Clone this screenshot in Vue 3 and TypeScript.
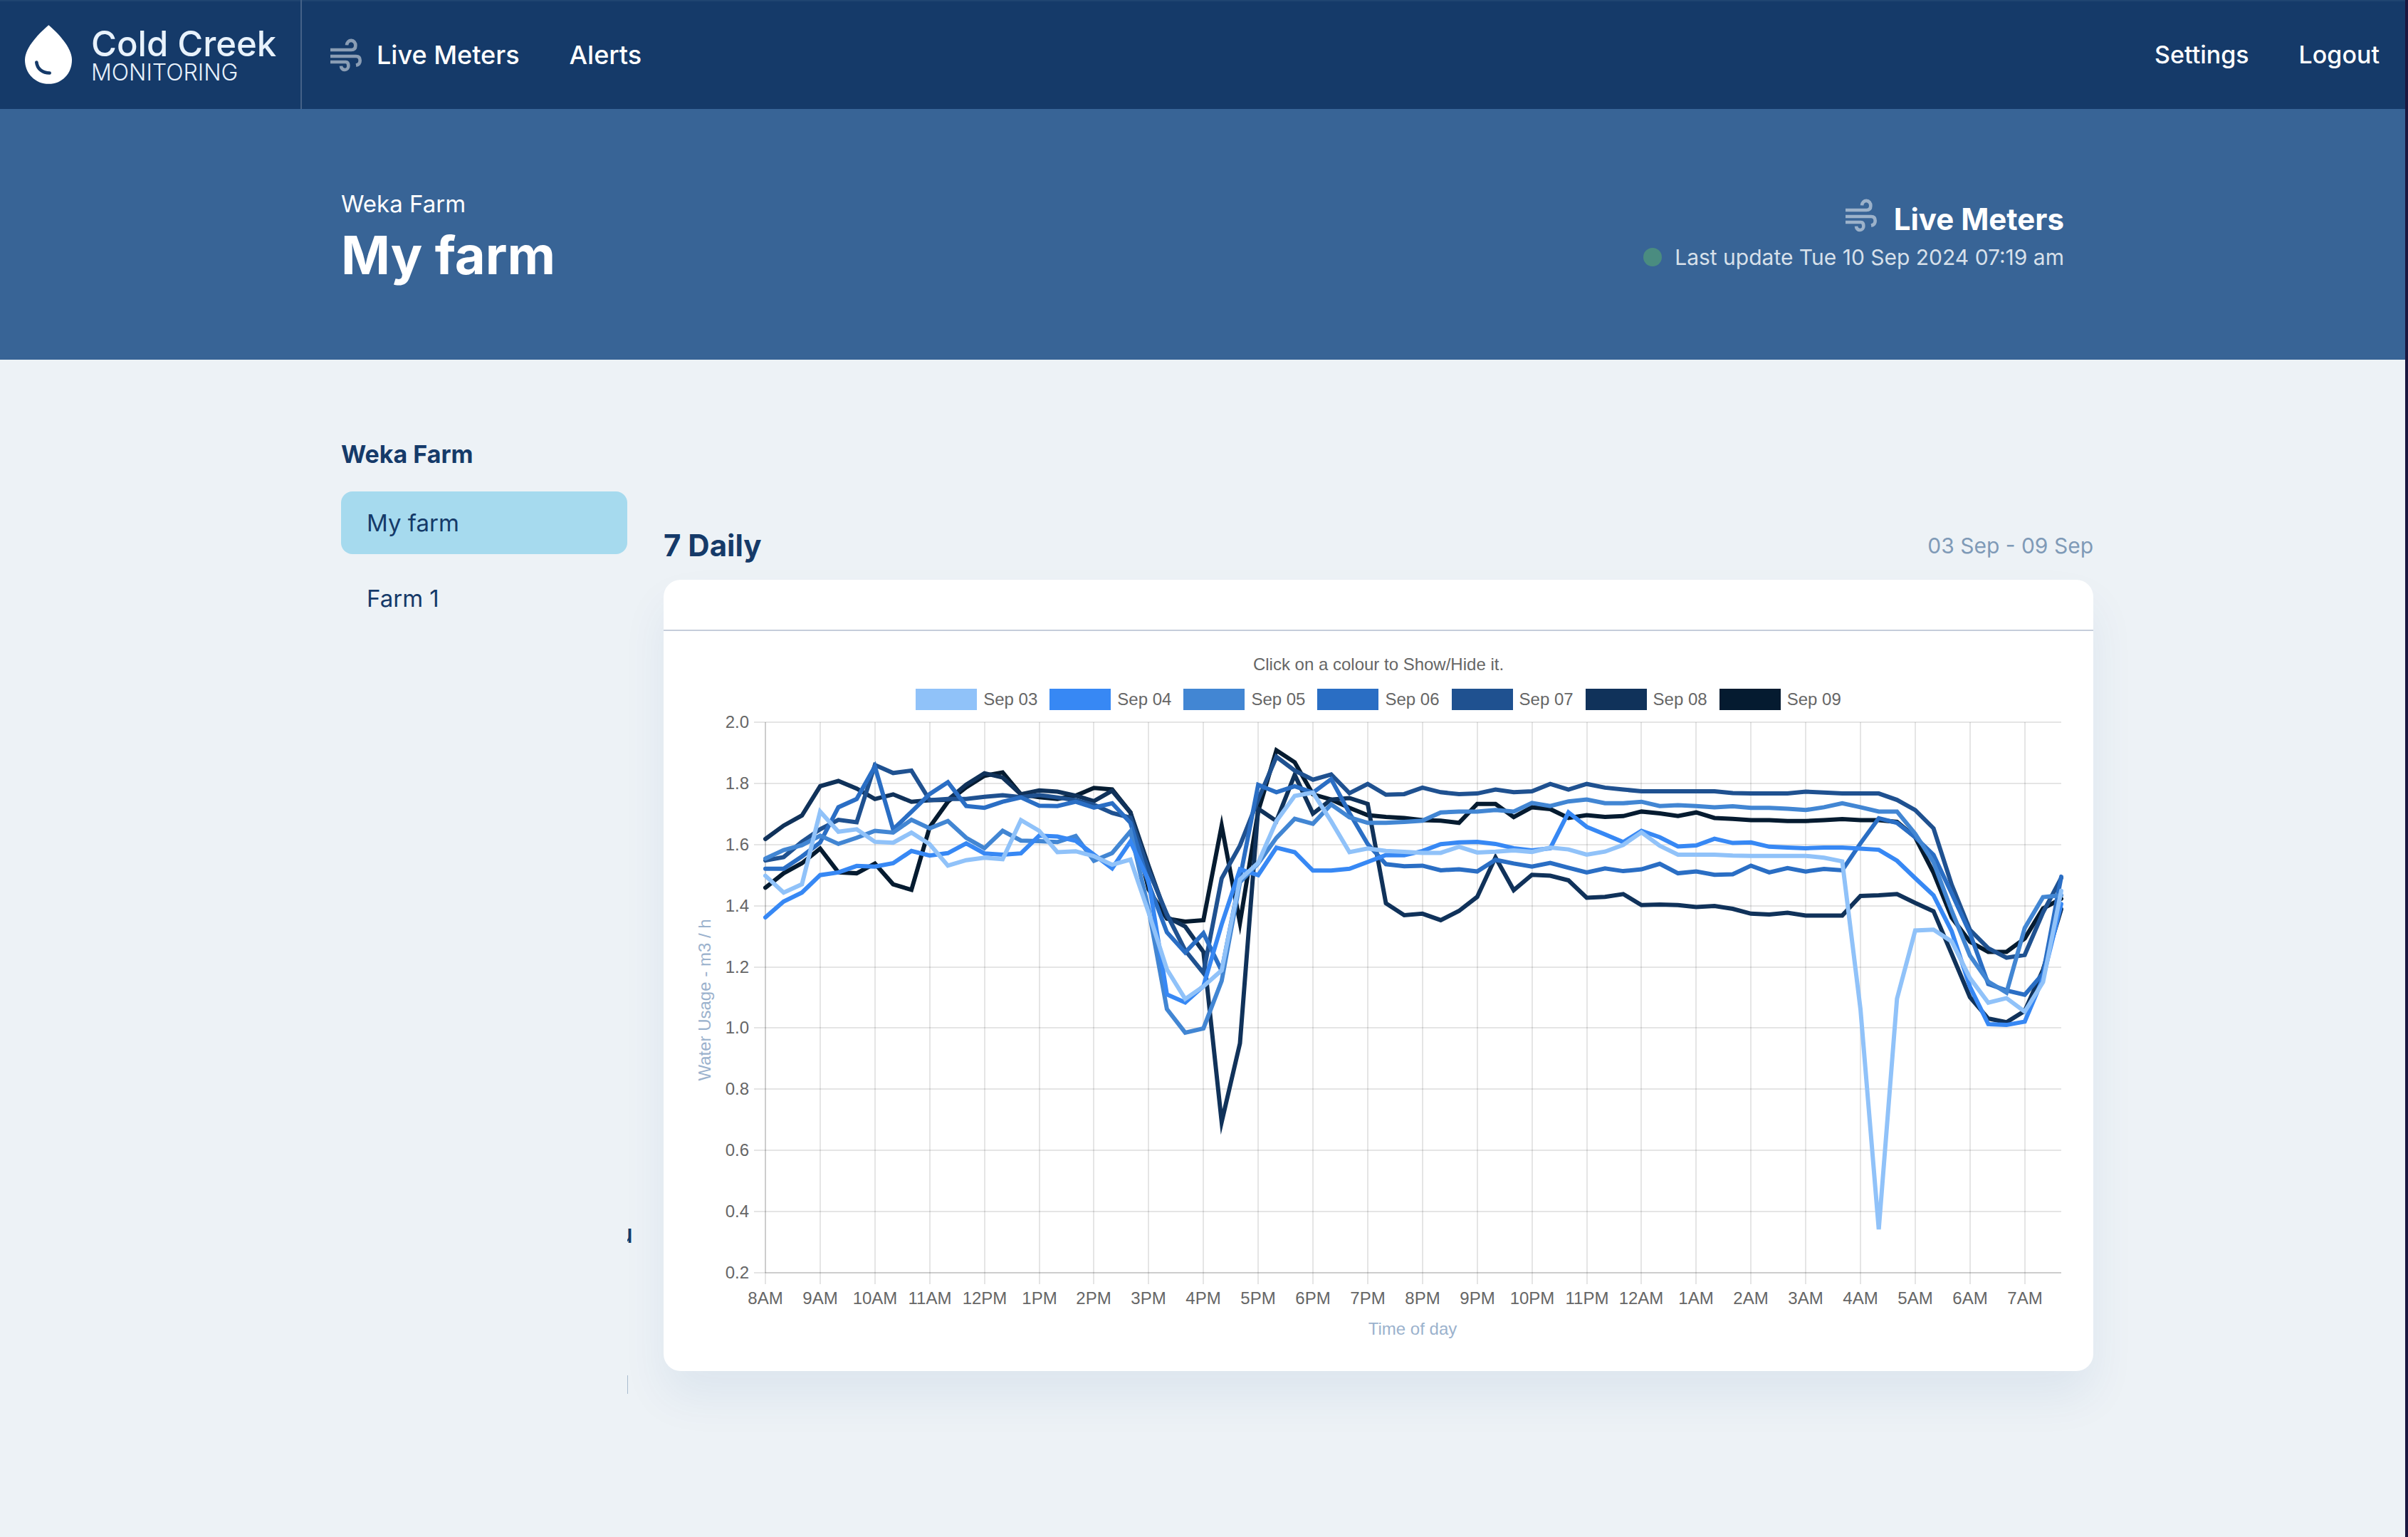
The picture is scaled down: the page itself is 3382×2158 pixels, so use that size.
<script setup lang="ts">
import { reactive } from 'vue'

interface Series {
  label: string
  color: string
  values: number[]
}

// Readings every 20 minutes, starting at 8AM.
const series: Series[] = [
  {
    label: 'Sep 03',
    color: '#90c2f9',
    values: [
      1.498, 1.443, 1.47, 1.708, 1.642, 1.65, 1.609, 1.606, 1.639, 1.601, 1.531, 1.549,
      1.557, 1.552, 1.68, 1.645, 1.575, 1.578, 1.562, 1.534, 1.551, 1.377, 1.192, 1.095,
      1.136, 1.189, 1.486, 1.54, 1.677, 1.759, 1.77, 1.676, 1.575, 1.587, 1.579, 1.576,
      1.573, 1.573, 1.593, 1.574, 1.577, 1.581, 1.576, 1.59, 1.584, 1.567, 1.577, 1.599,
      1.64, 1.596, 1.567, 1.567, 1.567, 1.564, 1.563, 1.563, 1.563, 1.563, 1.557, 1.545,
      1.062, 0.342, 1.096, 1.319, 1.322, 1.283, 1.163, 1.083, 1.098, 1.054, 1.15, 1.449,
    ],
  },
  {
    label: 'Sep 04',
    color: '#3788f4',
    values: [
      1.362, 1.414, 1.443, 1.5, 1.509, 1.53, 1.528, 1.539, 1.579, 1.564, 1.572, 1.604,
      1.571, 1.567, 1.571, 1.629, 1.626, 1.612, 1.567, 1.522, 1.61, 1.481, 1.11, 1.084,
      1.137, 1.339, 1.519, 1.5, 1.59, 1.575, 1.515, 1.515, 1.521, 1.543, 1.566, 1.565,
      1.579, 1.601, 1.607, 1.609, 1.602, 1.588, 1.581, 1.588, 1.705, 1.658, 1.633, 1.608,
      1.645, 1.624, 1.594, 1.597, 1.619, 1.605, 1.607, 1.593, 1.59, 1.588, 1.59, 1.59,
      1.587, 1.583, 1.547, 1.49, 1.434, 1.316, 1.135, 1.013, 1.01, 1.021, 1.163, 1.406,
    ],
  },
  {
    label: 'Sep 05',
    color: '#4286d3',
    values: [
      1.554, 1.582, 1.598, 1.629, 1.602, 1.622, 1.645, 1.639, 1.681, 1.653, 1.677, 1.622,
      1.588, 1.645, 1.613, 1.611, 1.608, 1.628, 1.547, 1.572, 1.643, 1.387, 1.062, 0.985,
      0.999, 1.154, 1.477, 1.538, 1.622, 1.684, 1.668, 1.731, 1.689, 1.671, 1.671, 1.674,
      1.678, 1.705, 1.708, 1.708, 1.713, 1.708, 1.736, 1.726, 1.741, 1.747, 1.735, 1.735,
      1.74, 1.726, 1.729, 1.726, 1.722, 1.725, 1.72, 1.72, 1.717, 1.713, 1.722, 1.735,
      1.722, 1.708, 1.708, 1.635, 1.542, 1.383, 1.237, 1.152, 1.116, 1.327, 1.428, 1.434,
    ],
  },
  {
    label: 'Sep 06',
    color: '#2a6ec4',
    values: [
      1.521, 1.521, 1.561, 1.607, 1.722, 1.749, 1.855, 1.65, 1.707, 1.765, 1.804, 1.726,
      1.72, 1.74, 1.754, 1.727, 1.726, 1.74, 1.721, 1.735, 1.671, 1.472, 1.313, 1.247,
      1.31, 1.187, 1.49, 1.795, 1.771, 1.791, 1.77, 1.814, 1.703, 1.602, 1.536, 1.529,
      1.531, 1.516, 1.519, 1.512, 1.55, 1.538, 1.528, 1.54, 1.524, 1.509, 1.522, 1.513,
      1.519, 1.537, 1.506, 1.512, 1.501, 1.503, 1.531, 1.509, 1.523, 1.512, 1.52, 1.516,
      1.604, 1.686, 1.671, 1.624, 1.566, 1.44, 1.31, 1.144, 1.123, 1.109, 1.178, 1.495,
    ],
  },
  {
    label: 'Sep 07',
    color: '#1f5190',
    values: [
      1.548, 1.559, 1.609, 1.65, 1.681, 1.673, 1.86, 1.834, 1.842, 1.745, 1.749, 1.749,
      1.756, 1.761, 1.755, 1.762, 1.754, 1.745, 1.73, 1.703, 1.688, 1.515, 1.372, 1.254,
      1.18, 1.489, 1.597, 1.747, 1.887, 1.842, 1.812, 1.829, 1.768, 1.798, 1.763, 1.765,
      1.786, 1.771, 1.765, 1.767, 1.78, 1.771, 1.774, 1.798, 1.78, 1.798, 1.786, 1.78,
      1.774, 1.774, 1.774, 1.774, 1.774, 1.768, 1.767, 1.767, 1.767, 1.773, 1.77, 1.767,
      1.767, 1.767, 1.746, 1.713, 1.653, 1.468, 1.321, 1.261, 1.23, 1.239, 1.378, 1.491,
    ],
  },
  {
    label: 'Sep 08',
    color: '#10325a',
    values: [
      1.618, 1.662, 1.695, 1.791, 1.808, 1.783, 1.749, 1.764, 1.74, 1.745, 1.746, 1.796,
      1.833, 1.819, 1.764, 1.777, 1.773, 1.76, 1.742, 1.776, 1.705, 1.529, 1.363, 1.332,
      1.249, 0.693, 0.95, 1.717, 1.677, 1.828, 1.701, 1.747, 1.752, 1.733, 1.408, 1.369,
      1.374, 1.353, 1.383, 1.429, 1.558, 1.451, 1.501, 1.498, 1.483, 1.426, 1.429, 1.438,
      1.402, 1.404, 1.402, 1.396, 1.399, 1.39, 1.374, 1.371, 1.377, 1.368, 1.368, 1.368,
      1.432, 1.434, 1.438, 1.409, 1.382, 1.242, 1.101, 1.031, 1.019, 1.056, 1.191, 1.389,
    ],
  },
  {
    label: 'Sep 09',
    color: '#051b30',
    values: [
      1.459, 1.506, 1.539, 1.587, 1.509, 1.506, 1.538, 1.47, 1.452, 1.657, 1.74, 1.787,
      1.825, 1.836, 1.764, 1.755, 1.749, 1.76, 1.785, 1.78, 1.705, 1.453, 1.358, 1.348,
      1.353, 1.662, 1.344, 1.709, 1.908, 1.869, 1.764, 1.747, 1.72, 1.696, 1.69, 1.687,
      1.68, 1.678, 1.671, 1.733, 1.733, 1.69, 1.722, 1.716, 1.687, 1.696, 1.69, 1.693,
      1.708, 1.702, 1.693, 1.705, 1.687, 1.684, 1.68, 1.68, 1.677, 1.677, 1.68, 1.683,
      1.68, 1.68, 1.674, 1.624, 1.508, 1.361, 1.282, 1.249, 1.249, 1.293, 1.391, 1.423,
    ],
  },
]

const hours = [
  '8AM', '9AM', '10AM', '11AM', '12PM', '1PM', '2PM', '3PM', '4PM', '5PM', '6PM', '7PM',
  '8PM', '9PM', '10PM', '11PM', '12AM', '1AM', '2AM', '3AM', '4AM', '5AM', '6AM', '7AM',
]
const levels = [2.0, 1.8, 1.6, 1.4, 1.2, 1.0, 0.8, 0.6, 0.4, 0.2]

const plot = { left: 143, right: 1963, top: 14, bottom: 787 }
const xAt = (step: number) => plot.left + (step * (plot.right - plot.left)) / 71
const yAt = (value: number) => plot.top + ((2 - value) * (plot.bottom - plot.top)) / 1.8
const pointsOf = (s: Series) =>
  s.values.map((v, i) => `${xAt(i).toFixed(1)},${yAt(v).toFixed(1)}`).join(' ')

// The earliest day is painted last so it stays on top.
const painted = [...series].reverse()
const hidden = reactive<Record<string, boolean>>({})
const toggle = (label: string) => {
  hidden[label] = !hidden[label]
}

const windPaths = [
  'M6 54H94Q112 54 112 36A18 20 0 0 0 75 34',
  'M6 81H114Q131 81 131 99Q131 116 114 119',
  'M6 105H71Q82 105 82 121A15 16 0 0 1 51 122',
]
</script>

<template>
  <div class="page">
    <header class="topbar">
      <a class="brand" href="#">
        <svg class="drop" viewBox="105 105 198 248" aria-hidden="true">
          <path d="M205 105C240 135 303 197 303 252C303 310 260 353 205 353C150 353 105 310 105 252C105 197 170 135 205 105Z" fill="#fff" />
          <path d="M154 262C157 290 180 307 209 307" fill="none" stroke="#153a69" stroke-width="14" stroke-linecap="round" />
        </svg>
        <span class="brand-text">
          <span class="brand-name">Cold Creek</span>
          <span class="brand-sub">MONITORING</span>
        </span>
      </a>
      <nav class="nav">
        <a class="nav-link" href="#">
          <svg class="wind" viewBox="0 0 144 150" aria-hidden="true">
            <path v-for="d in windPaths" :key="d" :d="d" />
          </svg>
          Live Meters
        </a>
        <a class="nav-link" href="#">Alerts</a>
      </nav>
      <nav class="account">
        <a href="#">Settings</a>
        <a href="#">Logout</a>
      </nav>
    </header>

    <section class="hero">
      <div class="container hero-row">
        <div>
          <div class="hero-parent">Weka Farm</div>
          <h1>My farm</h1>
        </div>
        <div class="status">
          <div class="status-title">
            <svg class="wind" viewBox="0 0 144 150" aria-hidden="true">
              <path v-for="d in windPaths" :key="d" :d="d" />
            </svg>
            Live Meters
          </div>
          <div class="status-line"><span class="dot"></span>Last update Tue 10 Sep 2024 07:19 am</div>
        </div>
      </div>
    </section>

    <div class="container body-row">
      <aside class="sidebar">
        <h2>Weka Farm</h2>
        <a class="farm active" href="#">My farm</a>
        <a class="farm" href="#">Farm 1</a>
      </aside>

      <main class="slides">
        <div class="peek-title" aria-hidden="true">u</div>
        <div class="peek-rule"></div>
        <div class="slide-head">
          <h2>7 Daily</h2>
          <span class="range">03 Sep - 09 Sep</span>
        </div>
        <section class="card">
          <div class="card-top"></div>
          <p class="hint">Click on a colour to Show/Hide it.</p>
          <div class="legend">
            <button
              v-for="s in series"
              :key="s.label"
              type="button"
              class="legend-item"
              :class="{ off: hidden[s.label] }"
              @click="toggle(s.label)"
            >
              <span class="swatch" :style="{ background: s.color }"></span>{{ s.label }}
            </button>
          </div>
          <svg class="chart" viewBox="0 0 2008 925" role="img" aria-label="Water usage by time of day">
            <g class="grid">
              <line v-for="(h, i) in hours" :key="h" :x1="Math.round(xAt(i * 3))" :x2="Math.round(xAt(i * 3))" :y1="plot.top" :y2="plot.bottom + 16" />
              <line v-for="l in levels" :key="l" :x1="plot.left - 16" :x2="plot.right" :y1="Math.round(yAt(l))" :y2="Math.round(yAt(l))" />
              <line :x1="plot.left" :x2="plot.left" :y1="plot.top" :y2="plot.bottom" />
              <line :x1="plot.left" :x2="plot.right" :y1="plot.bottom" :y2="plot.bottom" />
            </g>
            <g class="ticks">
              <text v-for="l in levels" :key="l" x="120" :y="Math.round(yAt(l)) + 8" text-anchor="end">{{ l.toFixed(1) }}</text>
              <text v-for="(h, i) in hours" :key="h" :x="Math.round(xAt(i * 3))" y="831" text-anchor="middle">{{ h }}</text>
            </g>
            <g class="axis-titles">
              <text x="1052" y="874" text-anchor="middle">Time of day</text>
              <text transform="translate(66 404) rotate(-90)" text-anchor="middle">Water Usage - m3 / h</text>
            </g>
            <g class="lines">
              <template v-for="s in painted" :key="s.label">
                <polyline v-if="!hidden[s.label]" :points="pointsOf(s)" :stroke="s.color" />
              </template>
            </g>
          </svg>
        </section>
      </main>
    </div>
  </div>
</template>

<style>
body {
  margin: 0;
  background: #edf2f6;
}
</style>

<style scoped>
.page {
  box-sizing: border-box;
  min-height: 100vh;
  border-right: 4px solid #1b1740;
  background: #edf2f6;
  color: #153a69;
  font-family: Inter, 'Liberation Sans', sans-serif;
  overflow: hidden;
}
a {
  color: inherit;
  text-decoration: none;
}
h1,
h2,
p {
  margin: 0;
}
.topbar {
  box-sizing: border-box;
  display: flex;
  height: 153px;
  color: #fff;
  background: #153a69;
  box-shadow: inset 0 2px 0 #1f4471;
}
.brand {
  box-sizing: border-box;
  display: flex;
  align-items: center;
  gap: 27px;
  width: 424px;
  padding-left: 35px;
  border-right: 2px solid #456288;
}
.drop {
  width: 66px;
  height: 83px;
}
.brand-text {
  display: flex;
  flex-direction: column;
  color: #e8f2fc;
}
.brand-name {
  font-size: 49px;
  font-weight: 500;
  line-height: 50px;
}
.brand-sub {
  font-size: 32px;
  font-weight: 300;
  line-height: 30px;
}
.nav,
.account {
  display: flex;
  align-items: center;
  gap: 70px;
}
.nav {
  flex: 1;
  padding-left: 38px;
  font-size: 36px;
  font-weight: 500;
}
.nav-link {
  display: flex;
  align-items: center;
  gap: 19px;
}
.wind {
  width: 48px;
  height: 50px;
  fill: none;
  stroke: #fff;
  stroke-width: 14px;
  opacity: 0.5;
}
.account {
  padding-right: 36px;
  font-size: 34px;
  font-weight: 500;
}
.container {
  max-width: 2420px;
  margin: 0 auto;
}
.hero {
  padding: 110px 0 98px;
  background: #386496;
  color: #fff;
}
.hero-row {
  display: flex;
  align-items: center;
  justify-content: space-between;
}
.hero-parent {
  font-size: 33px;
  line-height: 46px;
}
h1 {
  font-size: 74px;
  font-weight: 700;
  line-height: 98px;
}
.status {
  display: flex;
  flex-direction: column;
  align-items: flex-end;
}
.status-title {
  display: flex;
  align-items: center;
  gap: 22px;
  height: 52px;
  font-size: 42px;
  font-weight: 700;
}
.status-title .wind {
  margin-bottom: 10px;
}
.status-line {
  display: flex;
  align-items: center;
  gap: 18px;
  font-size: 30px;
  line-height: 56px;
  color: #d7e0ea;
}
.dot {
  width: 26px;
  height: 26px;
  border-radius: 50%;
  background: #4a8c80;
}
.body-row {
  display: flex;
}
.sidebar {
  display: flex;
  flex-direction: column;
  gap: 18px;
  flex: 0 0 402px;
  padding-top: 110px;
}
.sidebar h2 {
  margin-bottom: 11px;
  font-size: 34px;
  font-weight: 700;
  line-height: 46px;
}
.farm {
  padding: 0 36px;
  border-radius: 16px;
  font-size: 33px;
  line-height: 88px;
}
.farm.active {
  background: #a6daee;
}
.slides {
  position: relative;
  flex: 1;
  min-width: 0;
  margin-right: -92px;
  padding: 234px 51px 180px;
  overflow: hidden;
}
.peek-title {
  position: absolute;
  top: 1205px;
  left: 0;
  display: flex;
  justify-content: flex-end;
  width: 8px;
  overflow: hidden;
  font-size: 36px;
  font-weight: 500;
  line-height: 44px;
}
.peek-rule {
  position: absolute;
  top: 1426px;
  left: 0;
  width: 1px;
  height: 26px;
  background: #a9bccf;
}
.slide-head {
  display: flex;
  align-items: center;
  justify-content: space-between;
  margin-bottom: 21px;
}
.slide-head h2 {
  font-size: 42px;
  font-weight: 700;
  line-height: 54px;
}
.range {
  font-size: 30px;
  color: #7f9ab7;
}
.card {
  border-radius: 24px;
  background: #fff;
  box-shadow: 0 36px 64px rgba(20, 70, 140, 0.07);
  font-family: 'Liberation Sans', Arial, sans-serif;
}
.card-top {
  height: 70px;
  border-bottom: 2px solid #c5cdda;
}
.hint {
  padding: 33px 0 20px;
  font-size: 24px;
  line-height: 28px;
  text-align: center;
  color: #666;
}
.legend {
  display: flex;
  justify-content: center;
  gap: 17px;
  margin-bottom: 3px;
}
.legend-item {
  display: flex;
  align-items: center;
  gap: 9px;
  height: 30px;
  padding: 0;
  border: 0;
  background: none;
  color: #666;
  font: 24px 'Liberation Sans', Arial, sans-serif;
  cursor: pointer;
}
.legend-item.off {
  text-decoration: line-through;
}
.swatch {
  width: 86px;
  height: 30px;
}
.chart {
  display: block;
  width: 100%;
  font-size: 24px;
}
.grid {
  stroke: rgba(0, 0, 0, 0.1);
  stroke-width: 2px;
}
.ticks {
  fill: #666;
}
.axis-titles {
  fill: #9bb2cd;
}
.lines {
  fill: none;
  stroke-width: 6px;
  stroke-linecap: round;
  stroke-miterlimit: 10;
}
</style>
